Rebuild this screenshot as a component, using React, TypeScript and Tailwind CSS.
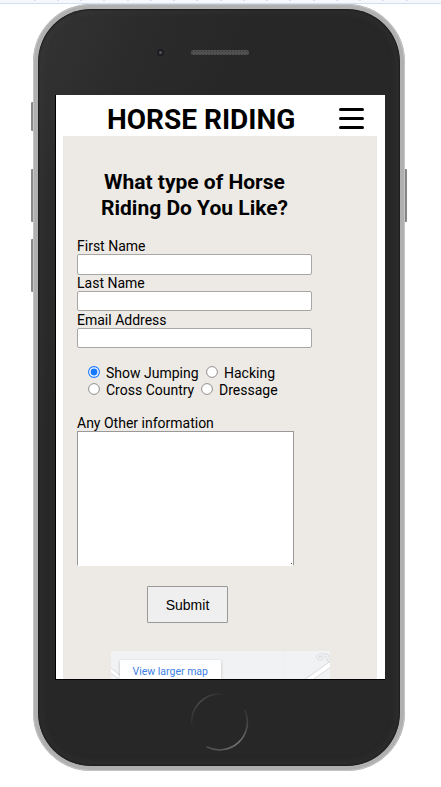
import React from "react";

function Field({ label, box }: { label: string; box: string }) {
  return (
    <label className="block h-[37px]">
      <span className="block h-4 text-[14px] leading-4">{label}</span>
      <input
        type="text"
        className={`block w-[235px] rounded-[2px] border border-[#a9a7a5] bg-white ${box}`}
      />
    </label>
  );
}

function Radio({ checked = false }: { checked?: boolean }) {
  return (
    <svg viewBox="0 0 12 12" className="h-3 w-3 shrink-0">
      <circle cx="6" cy="6" r="5.4" fill="#fff" stroke={checked ? "#1677ff" : "#858585"} strokeWidth={checked ? 1.1 : 0.9} />
      {checked && <circle cx="6" cy="6" r="3.4" fill="#1677ff" />}
    </svg>
  );
}

function MapPreview() {
  return (
    <div className="relative ml-12 h-7 w-[219px] overflow-hidden bg-[#f1f2f4]">
      <svg viewBox="0 0 219 28" className="block h-7 w-[219px]" fill="none">
        <path d="M173.500 0V28" stroke="#eceef0" />
        <path d="M-2 18L16 32" stroke="#dcdddf" strokeWidth="5" />
        <path d="M-2 18L16 32" stroke="#fff" strokeWidth="3" />
        <path d="M193 32L221 12" stroke="#dcdddf" strokeWidth="6" />
        <path d="M193 32L221 12" stroke="#fff" strokeWidth="4" />
        <path d="M212 4C207 3 205 7 209 8C213 9 211 3 215 4C219 5 214 9 221 11" stroke="#d9dbde" strokeWidth="3.2" />
        <path d="M212 4C207 3 205 7 209 8C213 9 211 3 215 4C219 5 214 9 221 11" stroke="#f2f3f5" strokeWidth="1.5" />
      </svg>
      <div className="absolute left-[9px] top-[9px] h-8 w-[101px] rounded-[1px] bg-white pl-[12.5px] text-[10.5px] leading-[23px] text-[#3c7fe4] shadow-[0_1px_3px_rgba(0,0,0,0.25)]">
        View larger map
      </div>
    </div>
  );
}

export default function App() {
  return (
    <div className="h-[787px] w-[441px] overflow-hidden bg-white font-['Roboto',sans-serif] text-black">
      <div className="flex h-1 items-start justify-center border-b border-[#cfe0f3] bg-[#f6f8fc]">
        <div className="flex w-[374px] justify-between">
          {Array.from({ length: 17 }, (_, i) => (
            <i key={i} className="h-px w-0.5 bg-[#d3e3f5]" />
          ))}
        </div>
      </div>
      <div className="relative ml-[33px] h-[767px] w-[372px]">
        <div className="absolute -left-0.5 top-[98px] h-[29px] w-[3px] rounded-l-[1px] bg-[#898989]" />
        <div className="absolute -left-0.5 top-[165px] h-[53px] w-[3px] rounded-l-[1px] bg-[#898989]" />
        <div className="absolute -left-0.5 top-[235px] h-[53px] w-[3px] rounded-l-[1px] bg-[#898989]" />
        <div className="absolute -right-[2px] top-[165px] h-[53px] w-[3px] rounded-r-[1px] bg-[#858585]" />
        <div className="relative h-[767px] w-[372px] rounded-[58px] border-[5px] border-[#b0b0b0] bg-[linear-gradient(115deg,#343434_0%,#2c2c2c_14%,#272727_30%,#272727_100%)] bg-clip-padding pl-[18px]">
          <div className="pointer-events-none absolute inset-0 rounded-[53px] shadow-[inset_0_0_2px_1px_#1c1c1c,inset_0_0_6px_4px_rgba(70,70,70,0.25)]" />
          <div className="pointer-events-none absolute -inset-[5px] rounded-[58px] border border-[#c4c4c4]" />
          <div className="flex h-[86px] items-start pl-[101px] pt-10">
            <div className="flex h-[7px] w-[7px] items-center justify-center rounded-full bg-[#1c1c22]">
              <div className="h-[3px] w-[3px] rounded-full bg-[#56565e]" />
            </div>
            <div className="ml-[27px] mt-px h-[5px] w-[58px] rounded-full bg-[#444] bg-[radial-gradient(#393939_35%,#505050_40%)] bg-[length:3px_3px]" />
          </div>

          <main className="relative h-[584px] w-[329px] overflow-hidden bg-white px-[7px]">
            <header className="flex h-[41px]">
              <h1 className="ml-11 w-[189px] shrink-0 whitespace-nowrap text-[28px] font-bold leading-[49px]">HORSE RIDING</h1>
              <div className="ml-[43px] mt-[13px] flex h-[21px] w-[25px] flex-col justify-between">
                <i className="h-[3px] rounded-full bg-black" />
                <i className="h-[3px] rounded-full bg-black" />
                <i className="h-[3.5px] rounded-full bg-black" />
              </div>
            </header>
            <section className="h-[543px] w-[314px] bg-[#edeae5]">
              <h2 className="w-[263px] pt-[33px] text-center text-[21px] font-bold leading-[26px]">
                What type of Horse<br />Riding Do You Like?
              </h2>
              <form className="ml-[14px] mt-[17px]">
                <Field label="First Name" box="h-[21px]" />
                <Field label="Last Name" box="h-5" />
                <Field label="Email Address" box="h-5" />
                <div className="ml-[11px] mt-[14px] text-[14px] leading-[17px]">
                  <div className="flex h-[17px] items-center">
                    <Radio checked />
                    <span className="ml-1.5 w-[92px] whitespace-nowrap pt-1">Show Jumping</span>
                    <span className="ml-2"><Radio /></span>
                    <span className="ml-1.5 pt-1">Hacking</span>
                  </div>
                  <div className="flex h-[17px] items-center">
                    <Radio />
                    <span className="ml-1.5 w-[88px] whitespace-nowrap pt-1">Cross Country</span>
                    <span className="ml-[7px]"><Radio /></span>
                    <span className="ml-1.5 pt-1">Dressage</span>
                  </div>
                </div>
                <label className="relative mt-[18px] block w-[217px] text-[14px] leading-4">
                  <span className="block">Any Other information</span>
                  <textarea className="block h-[135px] w-[217px] resize-none border border-b-white border-[#999] bg-white" />
                  <i className="absolute bottom-0.5 right-0.5 h-px w-px bg-[#555]" />
                </label>
                <button type="button" className="ml-[70px] mt-5 block h-[37px] w-[81px] rounded-[1px] border border-[#999] bg-[#efefef] pt-0.5 font-['Liberation_Sans',sans-serif] text-[14px]">
                  Submit
                </button>
              </form>
              <div className="mt-7">
                <MapPreview />
              </div>
            </section>
          </main>
          <div className="pointer-events-none absolute left-[17px] top-[86px] h-[585px] w-[330px] border-b border-l border-black" />
          <svg viewBox="0 0 60 60" className="ml-[134px] mt-[13px] block h-[60px] w-[60px]" fill="none" strokeLinecap="round">
            <defs>
              <linearGradient id="arcTop" x1="2" y1="34" x2="34" y2="2" gradientUnits="userSpaceOnUse">
                <stop stopColor="#2b2b2b" />
                <stop offset=".5" stopColor="#4c4c4c" />
                <stop offset="1" stopColor="#2b2b2b" />
              </linearGradient>
              <linearGradient id="arcBottom" x1="56" y1="18" x2="17" y2="56" gradientUnits="userSpaceOnUse">
                <stop stopColor="#333" />
                <stop offset=".5" stopColor="#777" />
                <stop offset="1" stopColor="#4b4b4b" />
              </linearGradient>
            </defs>
            <path d="M1.800 33A28 28 0 0 1 32.500 2.200" stroke="url(#arcTop)" strokeWidth="1.5" />
            <path d="M55 18.500A28 28 0 0 1 17 55" stroke="url(#arcBottom)" strokeWidth="1.5" />
          </svg>
        </div>
      </div>
    </div>
  );
}
